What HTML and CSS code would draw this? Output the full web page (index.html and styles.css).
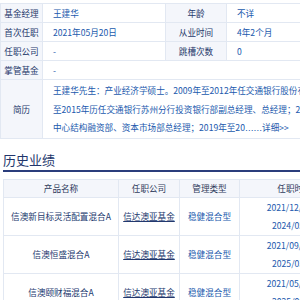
FILE: index.html
```html
<!DOCTYPE html>
<html lang="zh-CN">
<head>
<meta charset="utf-8">
<title>基金经理 王建华</title>
<link rel="stylesheet" href="styles.css">
</head>
<body>
<div class="page">
  <table class="info">
    <colgroup><col class="c-l1"><col class="c-v1"><col class="c-l2"><col class="c-v2"></colgroup>
    <tr><th>基金经理</th><td>王建华</td><th>年龄</th><td>不详</td></tr>
    <tr><th>首次任职</th><td>2021年05月20日</td><th>从业时间</th><td>4年2个月</td></tr>
    <tr><th>任职公司</th><td>-</td><th>跳槽次数</th><td>0</td></tr>
    <tr><th>掌管基金</th><td colspan="3">-</td></tr>
    <tr><th>简历</th><td colspan="3" class="resume">王建华先生：产业经济学硕士。2009年至2012年任交通银行股份有限公司苏州分行公司业务部客户经理，2012年<br>至2015年历任交通银行苏州分行投资银行部副总经理、总经理；2015年至2019年任交通银行总行投资银行<br>中心结构融资部、资本市场部总经理；2019年至20<span class="dots">……</span><a class="more" href="#">详细&gt;&gt;</a></td></tr>
  </table>

  <section class="history">
    <h2 class="title">历史业绩</h2>
    <table class="perf">
      <colgroup><col class="p1"><col class="p2"><col class="p3"><col class="p4"><col class="p5"></colgroup>
      <thead>
        <tr><th>产品名称</th><th>任职公司</th><th>管理类型</th><th>任职时间</th><th>任职回报</th></tr>
      </thead>
      <tbody>
        <tr><td class="name">信澳新目标灵活配置混合A</td><td><a class="co" href="#">信达澳亚基金</a></td><td class="type">稳健混合型</td><td class="date">2021/12/10 ～<br>2024/05/20</td><td class="ret">12.35%</td></tr>
        <tr><td class="name">信澳恒盛混合A</td><td><a class="co" href="#">信达澳亚基金</a></td><td class="type">稳健混合型</td><td class="date">2021/09/16 ～<br>2025/03/28</td><td class="ret">8.12%</td></tr>
        <tr><td class="name">信澳颐财福混合A</td><td><a class="co" href="#">信达澳亚基金</a></td><td class="type">稳健混合型</td><td class="date">2021/05/20 ～<br>2025/06/30</td><td class="ret">5.47%</td></tr>
      </tbody>
    </table>
  </section>
</div>
</body>
</html>
```

FILE: styles.css
```css
html, body {
  margin: 0;
  padding: 0;
  overflow: hidden;
  background: #ffffff;
}

body {
  font-family: "Noto Sans CJK SC", sans-serif;
  font-size: 8.6px;
  color: #26396b;
}

.page {
  width: 520px;
  padding-top: 3px;
}

table {
  border-collapse: collapse;
  table-layout: fixed;
}

.info {
  width: 400px;
}

.c-l1 { width: 42px; }
.c-v1 { width: 123px; }
.c-l2 { width: 61px; }
.c-v2 { width: 174px; }

.info th,
.info td {
  border: 1px solid #e2e8f2;
  height: 18px;
  padding: 0;
  line-height: 18px;
  white-space: nowrap;
}

.info th {
  background: #f4f6fb;
  font-weight: normal;
  color: #26396b;
  text-align: center;
}

.info td {
  color: #2159ad;
  padding-left: 10px;
  text-align: left;
}

.info .resume {
  line-height: 18.5px;
  padding-top: 1px;
  padding-bottom: 0;
  overflow: hidden;
}

.dots {
  font-family: "DejaVu Sans", sans-serif;
}

.more {
  color: #2159ad;
  text-decoration: none;
}

.history {
  margin-left: 3px;
}

.title {
  margin: 11px 0 0 0;
  font-size: 13px;
  font-weight: normal;
  line-height: 19px;
  color: #22356b;
  border-bottom: 2px solid #2a3d7c;
  padding-bottom: 1px;
}

.perf {
  margin-top: 7px;
  width: 510px;
}

.p1 { width: 115px; }
.p2 { width: 61px; }
.p3 { width: 60px; }
.p4 { width: 110px; }
.p5 { width: 164px; }

.perf th,
.perf td {
  border: 1px solid #e2e8f2;
  padding: 0;
  text-align: center;
  white-space: nowrap;
}

.perf th {
  background: #f4f6fb;
  font-weight: normal;
  color: #2f3b5c;
  height: 17px;
  line-height: 17px;
}

.perf td {
  height: 37px;
  line-height: 18px;
}

.perf .name { color: #22386e; }

.co {
  color: #22386e;
  text-decoration: underline;
}

.perf .type,
.perf .date,
.perf .ret { color: #2159ad; }
```
